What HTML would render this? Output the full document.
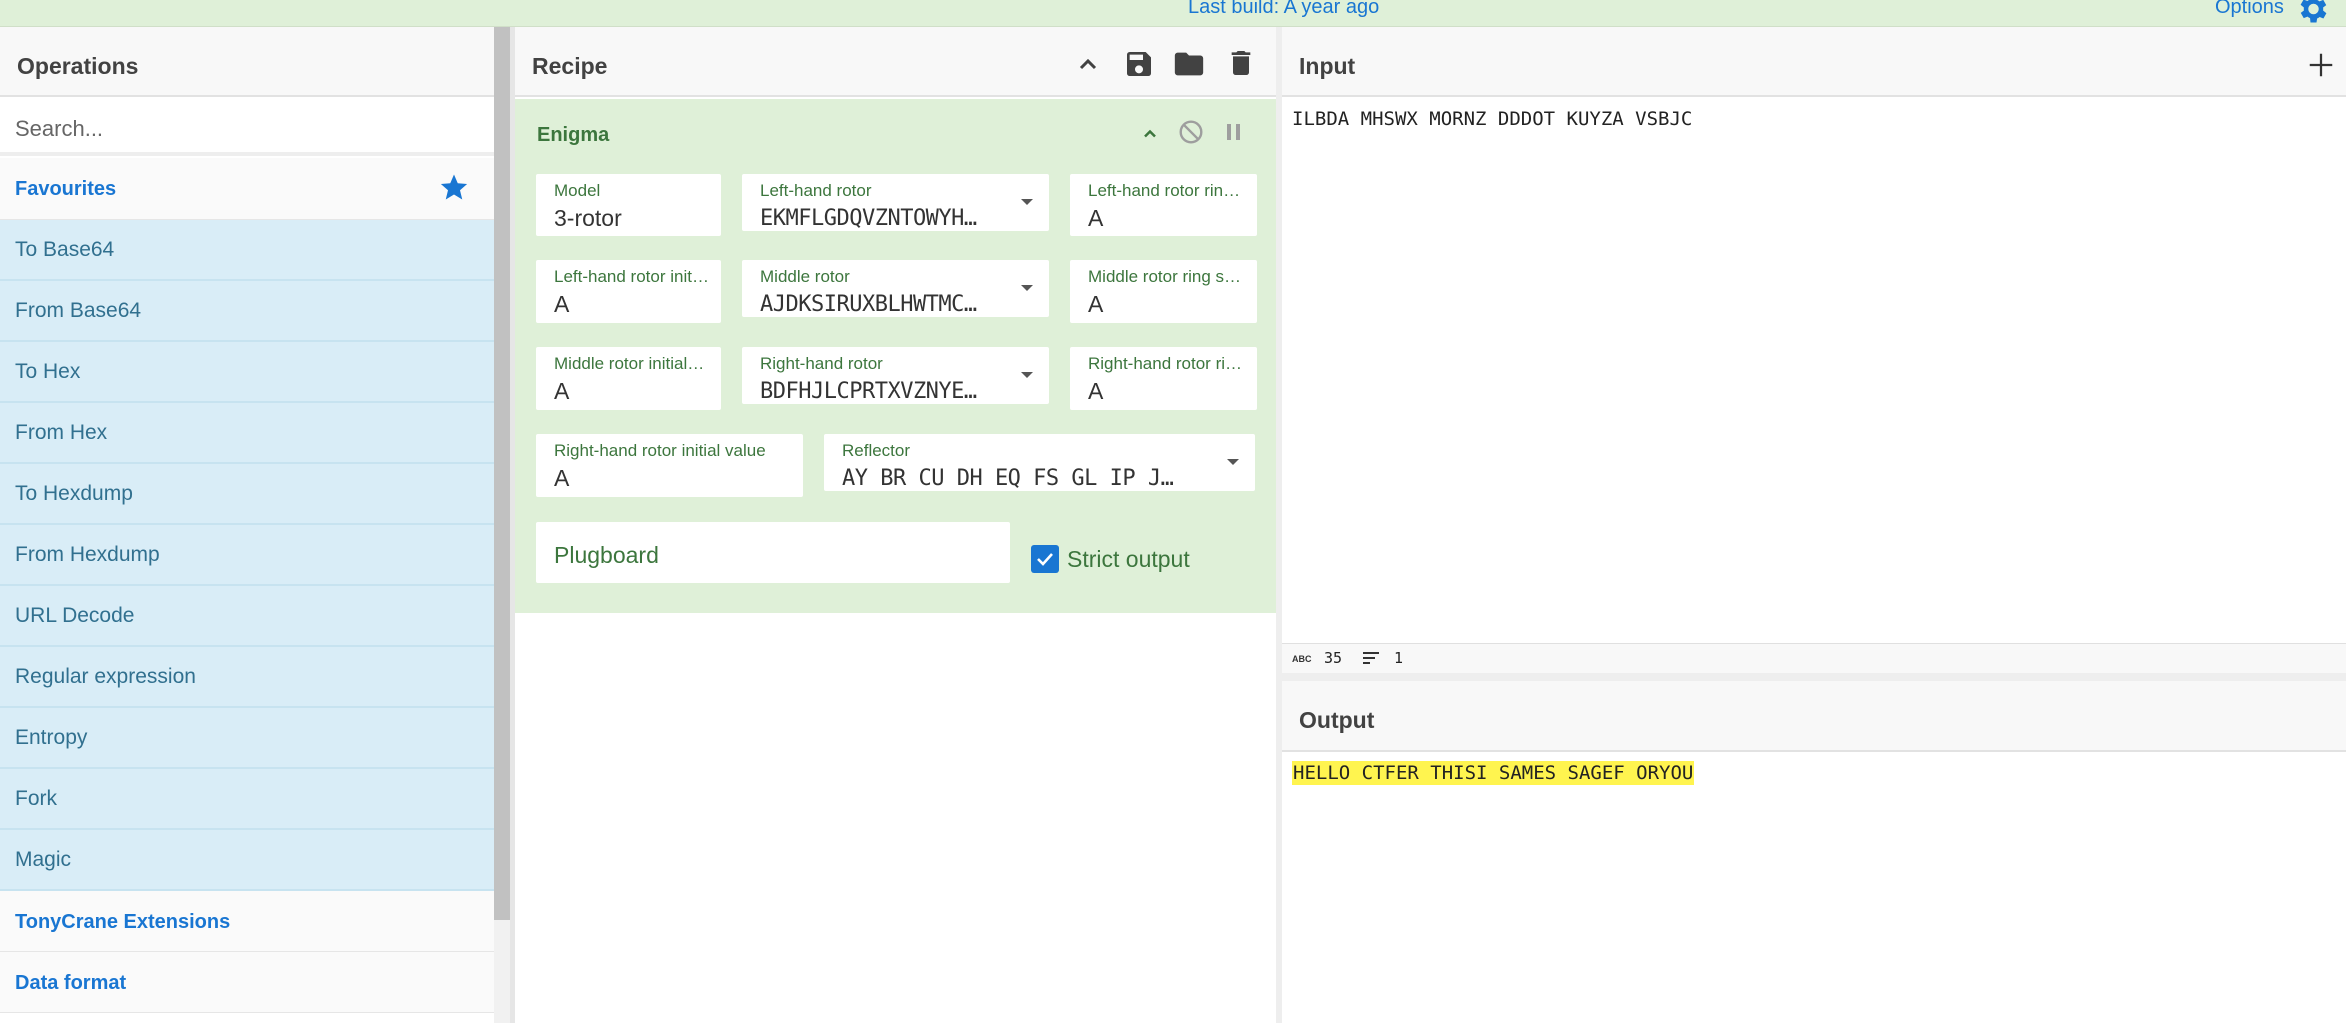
<!DOCTYPE html>
<html><head><meta charset="utf-8"><style>
*{box-sizing:border-box;margin:0;padding:0}
body{width:2346px;height:1023px;overflow:hidden;background:#fff;font-family:"Liberation Sans",sans-serif;position:relative}
.a{position:absolute}
.top{left:0;top:0;width:2346px;height:27px;background:#dff0d8;border-bottom:1px solid #d0dfc8}
.hdr{height:70px;background:#f8f8f8;border-bottom:2px solid #e2e2e2;font-weight:bold;font-size:23px;color:#424242;padding:26px 0 0 17px}
.item{left:0;width:494px;height:61px;background:#d9edf7;border-bottom:2px solid #c7e3f0;color:#31708f;font-size:21px;padding:18px 0 0 15px}
.cat{left:0;width:494px;height:61px;background:#fafafa;border-bottom:1px solid #e6e6e6;color:#1976d2;font-weight:bold;font-size:20px;padding:20px 0 0 15px}
.f{background:#fff;border-radius:2px}
.f .l{position:absolute;left:18px;top:7px;font-size:17px;color:#3c763d;white-space:nowrap}
.f .v{position:absolute;left:18px;top:31px;font-size:23px;color:#333}
.f .m{position:absolute;left:18px;top:32px;font-size:22px;color:#333;font-family:"DejaVu Sans Mono","Liberation Mono",monospace;white-space:nowrap;letter-spacing:-0.5px}
.f .c{position:absolute;right:16px;top:25px;width:0;height:0;border-left:6px solid transparent;border-right:6px solid transparent;border-top:6px solid #555}
.mono{font-family:"DejaVu Sans Mono","Liberation Mono",monospace;font-size:19px;color:#222;white-space:nowrap}
</style></head><body>
<div class="a top"></div>
<div class="a" style="left:1188px;top:-4px;font-size:20px;color:#1976d2">Last build: A year ago</div>
<div class="a" style="left:2215px;top:-4px;font-size:20px;color:#1976d2">Options</div>
<svg class="a" style="left:2294px;top:-9px" width="36" height="36" viewBox="0 0 24 24"><path fill="#1976d2" d="M19.4 13a7.5 7.5 0 0 0 0-2l2.1-1.6-2-3.5-2.5 1a7 7 0 0 0-1.7-1L15 3h-4l-.4 2.7a7 7 0 0 0-1.7 1l-2.5-1-2 3.5L6.6 11a7.5 7.5 0 0 0 0 2l-2.1 1.6 2 3.5 2.5-1a7 7 0 0 0 1.7 1L11 21h4l.4-2.7a7 7 0 0 0 1.7-1l2.5 1 2-3.5zM13 15.5a3.5 3.5 0 1 1 0-7 3.5 3.5 0 0 1 0 7z"/></svg>

<!-- Operations -->
<div class="a hdr" style="left:0;top:27px;width:494px">Operations</div>
<div class="a" style="left:0;top:97px;width:494px;height:59px;background:#fff;border-bottom:4px solid #eee;font-size:22px;color:#666;padding:19px 0 0 15px">Search...</div>
<div class="a cat" style="top:158px;height:62px">Favourites</div>
<svg class="a" style="left:439px;top:172px" width="30" height="30" viewBox="0 0 24 24"><path fill="#1976d2" d="M12 2l3 7 7.5.6-5.7 5 1.8 7.4L12 18l-6.6 4 1.8-7.4-5.7-5L9 9z"/></svg>
<div class="a item" style="top:220px">To Base64</div>
<div class="a item" style="top:281px">From Base64</div>
<div class="a item" style="top:342px">To Hex</div>
<div class="a item" style="top:403px">From Hex</div>
<div class="a item" style="top:464px">To Hexdump</div>
<div class="a item" style="top:525px">From Hexdump</div>
<div class="a item" style="top:586px">URL Decode</div>
<div class="a item" style="top:647px">Regular expression</div>
<div class="a item" style="top:708px">Entropy</div>
<div class="a item" style="top:769px">Fork</div>
<div class="a item" style="top:830px">Magic</div>
<div class="a cat" style="top:891px">TonyCrane Extensions</div>
<div class="a cat" style="top:952px">Data format</div>
<div class="a" style="left:494px;top:27px;width:16px;height:996px;background:#f1f1f1"></div>
<div class="a" style="left:494px;top:27px;width:16px;height:893px;background:#c1c1c1"></div>
<div class="a" style="left:510px;top:27px;width:5px;height:996px;background:#e6e6e6"></div>

<!-- Recipe -->
<div class="a hdr" style="left:515px;top:27px;width:761px">Recipe</div>
<svg class="a" style="left:1076px;top:52px" width="24" height="24" viewBox="0 0 24 24"><path d="M5 16l7-7 7 7" fill="none" stroke="#424242" stroke-width="3"/></svg>
<svg class="a" style="left:1123px;top:48px" width="32" height="32" viewBox="0 0 24 24"><path fill="#424242" d="M17 3H5a2 2 0 0 0-2 2v14a2 2 0 0 0 2 2h14a2 2 0 0 0 2-2V7zm-5 16a3 3 0 1 1 0-6 3 3 0 0 1 0 6zm3-10H5V5h10z"/></svg>
<svg class="a" style="left:1172px;top:47px" width="34" height="34" viewBox="0 0 24 24"><path fill="#424242" d="M10 4H4a2 2 0 0 0-2 2v12a2 2 0 0 0 2 2h16a2 2 0 0 0 2-2V8a2 2 0 0 0-2-2h-8z"/></svg>
<svg class="a" style="left:1225px;top:47px" width="32" height="32" viewBox="0 0 24 24"><path fill="#424242" d="M6 19a2 2 0 0 0 2 2h8a2 2 0 0 0 2-2V7H6zM19 4h-3.5l-1-1h-5l-1 1H5v2h14z"/></svg>
<div class="a" style="left:515px;top:99px;width:761px;height:514px;background:#dff0d8"></div>
<div class="a" style="left:537px;top:124px;font-size:20px;font-weight:bold;color:#3c763d">Enigma</div>
<svg class="a" style="left:1140px;top:124px" width="20" height="20" viewBox="0 0 24 24"><path d="M6 15l6-6 6 6" fill="none" stroke="#3c763d" stroke-width="3"/></svg>
<svg class="a" style="left:1178px;top:119px" width="26" height="26" viewBox="0 0 24 24"><circle cx="12" cy="12" r="9.5" fill="none" stroke="#9e9e9e" stroke-width="2.2"/><path d="M5.5 5.5l13 13" stroke="#9e9e9e" stroke-width="2.2"/></svg>
<div class="a" style="left:1227px;top:124px;width:4px;height:16px;background:#9e9e9e"></div>
<div class="a" style="left:1236px;top:124px;width:4px;height:16px;background:#9e9e9e"></div>

<div class="a f" style="left:536px;top:174px;width:185px;height:62px"><div class="l">Model</div><div class="v">3-rotor</div></div>
<div class="a f" style="left:742px;top:174px;width:307px;height:57px"><div class="l">Left-hand rotor</div><div class="m">EKMFLGDQVZNTOWYH…</div><div class="c"></div></div>
<div class="a f" style="left:1070px;top:174px;width:187px;height:62px;overflow:hidden"><div class="l">Left-hand rotor rin…</div><div class="v">A</div></div>

<div class="a f" style="left:536px;top:260px;width:185px;height:63px;overflow:hidden"><div class="l">Left-hand rotor init…</div><div class="v">A</div></div>
<div class="a f" style="left:742px;top:260px;width:307px;height:57px"><div class="l">Middle rotor</div><div class="m">AJDKSIRUXBLHWTMC…</div><div class="c"></div></div>
<div class="a f" style="left:1070px;top:260px;width:187px;height:63px;overflow:hidden"><div class="l">Middle rotor ring s…</div><div class="v">A</div></div>

<div class="a f" style="left:536px;top:347px;width:185px;height:63px;overflow:hidden"><div class="l">Middle rotor initial…</div><div class="v">A</div></div>
<div class="a f" style="left:742px;top:347px;width:307px;height:57px"><div class="l">Right-hand rotor</div><div class="m">BDFHJLCPRTXVZNYE…</div><div class="c"></div></div>
<div class="a f" style="left:1070px;top:347px;width:187px;height:63px;overflow:hidden"><div class="l">Right-hand rotor ri…</div><div class="v">A</div></div>

<div class="a f" style="left:536px;top:434px;width:267px;height:63px"><div class="l">Right-hand rotor initial value</div><div class="v">A</div></div>
<div class="a f" style="left:824px;top:434px;width:431px;height:57px"><div class="l">Reflector</div><div class="m">AY BR CU DH EQ FS GL IP J…</div><div class="c"></div></div>

<div class="a f" style="left:536px;top:522px;width:474px;height:61px"><div style="position:absolute;left:18px;top:20px;font-size:23px;color:#3c763d">Plugboard</div></div>
<div class="a" style="left:1031px;top:545px;width:28px;height:28px;background:#1976d2;border-radius:3px"></div>
<svg class="a" style="left:1033px;top:547px" width="24" height="24" viewBox="0 0 24 24"><path d="M5 12l5 5 9-10" fill="none" stroke="#fff" stroke-width="2.6"/></svg>
<div class="a" style="left:1067px;top:546px;font-size:23px;color:#3c763d">Strict output</div>

<div class="a" style="left:1276px;top:27px;width:6px;height:996px;background:#eee"></div>

<!-- Input -->
<div class="a hdr" style="left:1282px;top:27px;width:1064px">Input</div>
<svg class="a" style="left:2306px;top:50px" width="30" height="30" viewBox="0 0 24 24"><path d="M12 3v18M3 12h18" stroke="#333" stroke-width="1.8"/></svg>
<div class="a mono" style="left:1292px;top:108px">ILBDA MHSWX MORNZ DDDOT KUYZA VSBJC</div>
<div class="a" style="left:1282px;top:643px;width:1064px;height:30px;background:#f8f8f8;border-top:1px solid #e0e0e0"></div>
<div class="a" style="left:1292px;top:654px;font-size:9px;font-weight:bold;color:#333">ABC</div>
<div class="a mono" style="left:1324px;top:649px;font-size:15px">35</div>
<svg class="a" style="left:1362px;top:650px" width="20" height="18" viewBox="0 0 20 18"><path d="M1 3h16M1 8h12M1 13h7" stroke="#333" stroke-width="2"/></svg>
<div class="a mono" style="left:1394px;top:649px;font-size:15px">1</div>
<div class="a" style="left:1282px;top:673px;width:1064px;height:8px;background:#eee"></div>
<div class="a hdr" style="left:1282px;top:681px;width:1064px;height:71px">Output</div>
<div class="a mono" style="left:1292px;top:761px;background:#fff44f;padding:1px 1px">HELLO CTFER THISI SAMES SAGEF ORYOU</div>
</body></html>
